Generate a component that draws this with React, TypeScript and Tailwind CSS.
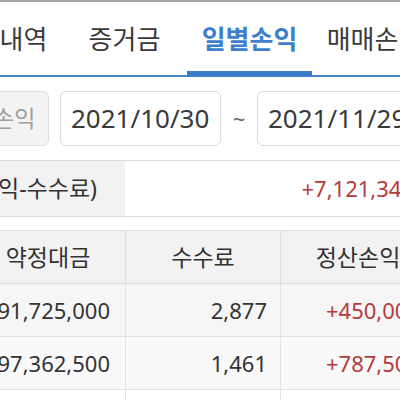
import React from "react"

const tabs = ["거래내역", "증거금", "일별손익", "매매손익"]

const rows = [
  { date: "2021/11/29", amount: "91,725,000", fee: "2,877", pnl: "+450,000", bg: "bg-[#f6f6f6]" },
  { date: "2021/11/26", amount: "97,362,500", fee: "1,461", pnl: "+787,500", bg: "bg-[#f9f9f9]" },
  { date: "2021/11/25", amount: "48,210,000", fee: "1,208", pnl: "+312,500", bg: "bg-white" },
]

const App = () => {
  return (
    <div className="w-[400px] h-[400px] overflow-hidden bg-white text-[#333] font-['Noto_Sans','Noto_Sans_CJK_KR',sans-serif]">
      <div className="h-[2px] bg-[#a5a5a5]" />

      {/* tabs */}
      <div className="h-[75px] border-b-2 border-[#4a86c9]">
        <div className="flex ml-[-63px] w-[500px] h-full pt-[2px]">
          {tabs.map((t, i) => (
            <div
              key={t}
              className={
                i === 2
                  ? "relative w-[125px] shrink-0 h-full flex items-center justify-center text-[26px] font-semibold text-[#3d7fcd]"
                  : "relative w-[125px] shrink-0 h-full flex items-center justify-center text-[26px] text-[#3a3a3a]"
              }
            >
              {t}
              {i === 2 && <div className="absolute left-0 right-0 bottom-[-2px] h-[6px] bg-[#3c7bcb]" />}
            </div>
          ))}
        </div>
      </div>

      {/* period */}
      <div className="flex items-center ml-[-63px] w-[500px] mt-[14px] h-[55px]">
        <div className="w-[112px] shrink-0 h-full flex items-center justify-center rounded-[6px] border border-[#e0e0e0] bg-[#f3f3f3] text-[23px] text-[#a0a0a0]">
          일별손익
        </div>
        <div className="ml-[11px] w-[161px] shrink-0 h-full flex items-center pl-[10px] rounded-[6px] border border-[#d9d9d9] text-[26px] text-[#3a3a3a]">
          2021/10/30
        </div>
        <div className="w-[36px] shrink-0 text-center text-[22px] text-[#666]">~</div>
        <div className="w-[161px] shrink-0 h-full flex items-center pl-[10px] rounded-[6px] border border-[#d9d9d9] text-[26px] text-[#3a3a3a]">
          2021/11/29
        </div>
      </div>

      {/* summary */}
      <div className="flex ml-[-63px] w-[500px] mt-[14px] h-[57px] border-y border-[#dedede]">
        <div className="w-[188px] shrink-0 flex items-center justify-end pr-[28px] bg-[#f2f2f2] text-[23px] whitespace-nowrap overflow-hidden">
          손익합계(정산손익-수수료)
        </div>
        <div className="flex-1 flex items-center justify-end pr-[23px] text-[22px] text-[#b8393b]">
          +7,121,345
        </div>
      </div>

      {/* table */}
      <div className="ml-[-185px] w-[620px] mt-[13px]">
        <div className="grid grid-cols-4 h-[54px] border-y border-[#dedede] bg-[#f2f2f2] text-[23px]">
          {["일자", "약정대금", "수수료", "정산손익"].map((h, i) => (
            <div key={h} className={i === 0 ? "flex items-center justify-center" : "flex items-center justify-center border-l border-[#dedede]"}>
              {h}
            </div>
          ))}
        </div>
        {rows.map((r) => (
          <div key={r.date} className={`grid grid-cols-4 h-[53px] border-b border-[#e3e3e3] text-[22px] ${r.bg}`}>
            <div className="flex items-center justify-center">{r.date}</div>
            <div className="flex items-center justify-end pr-[15px] border-l border-[#e3e3e3]">{r.amount}</div>
            <div className="flex items-center justify-end pr-[13px] border-l border-[#e3e3e3]">{r.fee}</div>
            <div className="flex items-center justify-end pr-[15px] border-l border-[#e3e3e3] text-[#b8393b]">{r.pnl}</div>
          </div>
        ))}
      </div>
    </div>
  )
}

export default App
